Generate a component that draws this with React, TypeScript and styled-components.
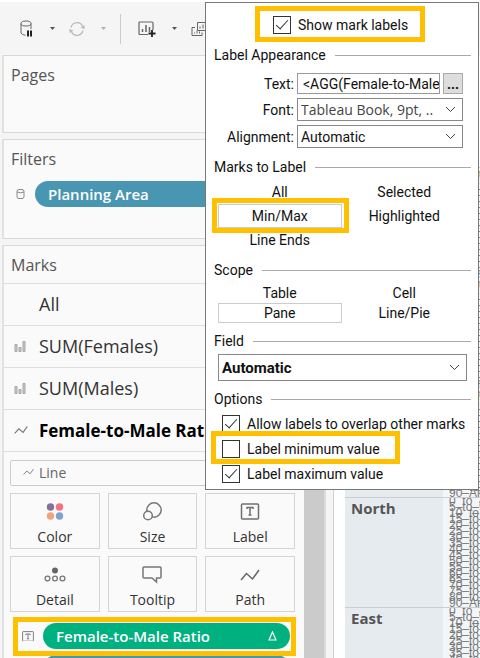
import React from "react";
import styled, { createGlobalStyle, css } from "styled-components";

const GlobalStyle = createGlobalStyle`
  *, *::before, *::after { box-sizing: border-box; }
  body { margin: 0; background: #fff; }
  button, input, select { font: inherit; color: inherit; margin: 0; padding: 0; }
`;

const book = `"Open Sans", "Noto Sans", sans-serif`;
const dialog = `Roboto, "Noto Sans", sans-serif`;

const Page = styled.div`
  position: relative;
  display: flex;
  flex-direction: column;
  height: 100vh;
  overflow: hidden;
  padding-top: 2px;
  background: #fff;
  font-family: ${book};
  color: #333;
`;

const Toolbar = styled.header`
  display: flex;
  align-items: center;
  height: 53px;
  flex: none;
  padding-left: 20px;
  background: #f5f5f5;
`;

const ToolButton = styled.button<{ $dim?: boolean }>`
  display: flex;
  align-items: center;
  border: 0;
  background: none;
  color: ${(p) => (p.$dim ? "#b8b8b8" : "#666")};
`;

const Caret = styled.button<{ $dim?: boolean }>`
  width: 5px;
  height: 3px;
  margin: 0 14px 0 16px;
  border: 0;
  background: ${(p) => (p.$dim ? "#b0b0b0" : "#555")};
  clip-path: polygon(0 0, 100% 0, 50% 100%);
`;

const ToolDivider = styled.span`
  width: 1px;
  height: 30px;
  margin-right: 17px;
  background: #ccc;
`;

const Workspace = styled.div`
  display: flex;
  flex: 1;
  min-height: 0;
`;

const Sidebar = styled.aside`
  flex: none;
  width: 304px;
  padding-left: 2px;
  display: flex;
  flex-direction: column;
  gap: 6px;
  background: #f5f5f5;
`;

const Shelf = styled.section<{ $height?: number }>`
  flex: none;
  ${(p) => p.$height && `height: ${p.$height}px;`}
  border: 1px solid #d8d8d8;
  border-left: 2px solid #e2e2e2;
  border-right: 0;
  background: #fafafa;
`;

const ShelfTitle = styled.h2`
  margin: 0;
  padding: 7px 7px 0;
  height: 37px;
  font-size: 16px;
  line-height: 24px;
  font-weight: 400;
  color: #555;
`;

const PillRow = styled.div`
  display: flex;
  align-items: center;
  padding-left: 12px;
  gap: 10px;
  margin-top: 4px;
`;

const Pill = styled.button<{ $green?: boolean }>`
  display: flex;
  align-items: center;
  justify-content: space-between;
  flex: 1;
  height: 26px;
  padding: 0 13px;
  border: 0;
  border-radius: 13px;
  background: ${(p) => (p.$green ? "#00b180" : "#4996b2")};
  color: #fff;
  font-size: 15px;
  font-weight: 600;
`;

const MarkRow = styled.button<{ $strong?: boolean }>`
  display: flex;
  align-items: center;
  width: 100%;
  height: 42px;
  padding-bottom: 1px;
  border: 0;
  border-top: 1px solid #dedede;
  background: none;
  font-size: 18px;
  text-align: left;
  white-space: nowrap;
  ${(p) => p.$strong && css`font-weight: 700; color: #000; font-size: 17px;`}
`;

const MarkIcon = styled.span`
  display: flex;
  align-items: center;
  padding-left: 10px;
  width: 35px;
`;

const MarkCard = styled.div`
  border-top: 1px solid #dedede;
  padding: 8px 9px 0 6px;
`;

const MarkType = styled.button`
  display: flex;
  align-items: center;
  gap: 5px;
  width: 100%;
  height: 26px;
  padding: 0 0 2px 12px;
  border: 1px solid #ccc;
  border-radius: 2px;
  background: #fafafa;
  color: #666;
  font-size: 14px;
`;

const Encodings = styled.div`
  display: grid;
  grid-template-columns: repeat(3, 1fr);
  gap: 7px 8px;
  margin-top: 7px;
`;

const Encoding = styled.button`
  display: flex;
  flex-direction: column;
  align-items: center;
  justify-content: space-between;
  height: 56px;
  padding: 7px 0 1px;
  border: 1px solid #d4d4d4;
  background: #fafafa;
  font-size: 14px;
  line-height: 20px;
`;

const MarkPills = styled.div`
  display: flex;
  flex-direction: column;
  gap: 6px;
  padding-top: 11px;
`;

const MarkPill = styled.div<{ $marked?: boolean }>`
  position: relative;
  display: grid;
  grid-template-columns: 12px 1fr;
  align-items: center;
  gap: 9px;
  padding: 0 5px 0 12px;
  ${(p) => p.$marked && css`
    &::after {
      content: "";
      position: absolute;
      inset: -6px -1px -7px 3px;
      border: 5px solid #ffc000;
      pointer-events: none;
      z-index: 1;
    }
  `}
`;

const Scrollbar = styled.div`
  flex: none;
  width: 20px;
  background: #cbcbcb;
`;

const Splitter = styled.div`
  flex: none;
  width: 10px;
  margin-right: 11px;
  border-left: 2px solid #dcdcdc;
  border-right: 1px solid #d0d0d0;
  background: #f5f5f5;
`;

const View = styled.main`
  flex: 1;
  min-width: 0;
  overflow: hidden;
  padding-top: 112px;
`;

const ViewTable = styled.table`
  width: 100%;
  table-layout: fixed;
  border-collapse: collapse;
`;

const Region = styled.th`
  width: 98px;
  height: 110px;
  padding: 0 0 0 6px;
  border-top: 1px solid #c8ced2;
  background: #e6ebf0;
  font-size: 15px;
  line-height: 20px;
  font-weight: 700;
  text-align: left;
  vertical-align: top;
  color: #555;
`;

const Ages = styled.td`
  height: 110px;
  padding: 0 0 0 6px;
  overflow: hidden;
  border-top: 1px solid #c8ced2;
  background: #f3f6f8;
  font-family: "Liberation Sans", sans-serif;
  font-size: 12px;
  color: #777;
  vertical-align: top;
`;

const Age = styled.div`
  height: 6px;
  line-height: 6px;
  white-space: nowrap;
`;

const Panel = styled.form`
  position: absolute;
  top: 2px;
  left: 205px;
  right: 1px;
  z-index: 2;
  padding: 0 7px 3px 8px;
  border: 1px solid #777;
  background: #fff;
  font-family: ${dialog};
  font-size: 14px;
  line-height: 20px;
  color: #111;
`;

const marker = css`
  &::after {
    content: "";
    position: absolute;
    border: 5px solid #ffc000;
    pointer-events: none;
    z-index: 1;
  }
`;

const Check = styled.label<{ $marked?: boolean }>`
  position: relative;
  display: flex;
  align-items: center;
  gap: 7px;
  height: 25px;
  white-space: nowrap;
  ${(p) => p.$marked && css`${marker} &::after { inset: -5px auto -3px -11px; width: 189px; }`}
`;

const HeadCheck = styled(Check)`
  width: 142px;
  height: 20px;
  margin: 12px auto 8px 59px;
  ${marker}
  &::after { inset: -9px -10px -7px -18px; }
`;

const Box = styled.input`
  appearance: none;
  flex: none;
  width: 18px;
  height: 18px;
  border: 1px solid #333;
  background: #fff;
  &:checked::after {
    content: "";
    display: block;
    width: 6px;
    height: 12px;
    margin: 0 0 0 5px;
    border: solid #333;
    border-width: 0 1px 1px 0;
    transform: rotate(42deg);
  }
`;

const Group = styled.fieldset`
  margin: 0;
  padding: 0;
  border: 0;
  min-width: 0;
`;

const Legend = styled.legend`
  display: flex;
  align-items: center;
  gap: 9px;
  width: 100%;
  height: 24px;
  padding: 0;
  white-space: nowrap;
  &::after {
    content: "";
    flex: 1;
    height: 1px;
    background: #aaa;
  }
`;

const Fields = styled.div`
  display: grid;
  grid-template-columns: 80px minmax(0, 1fr);
  column-gap: 3px;
  row-gap: 4px;
  align-items: center;
  padding: 6px 8px 7px 0;
`;

const FieldLabel = styled.label`
  text-align: right;
`;

const TextLine = styled.div`
  display: flex;
  gap: 3px;
  height: 21px;
`;

const TextBox = styled.input`
  flex: 1;
  min-width: 0;
  border: 1px solid #999;
  padding-left: 5px;
  background: #fff;
`;

const More = styled.button`
  flex: none;
  width: 20px;
  border: 1px solid #aaa;
  background: #ddd;
  line-height: 14px;
  font-weight: 700;
`;

const SelectWrap = styled.div<{ $field?: boolean }>`
  display: grid;
  align-items: center;
  height: 23px;
  ${(p) => p.$field && css`
    height: 27px;
    margin: 1px 4px 6px;
    font-weight: 700;
    font-size: 15px;
  `}
  > * { grid-area: 1 / 1; }
  > svg { justify-self: end; margin-right: 7px; pointer-events: none; }
`;

const Select = styled.select`
  appearance: none;
  width: 100%;
  height: 100%;
  padding: 0 0 0 3px;
  border: 1px solid #888;
  border-radius: 0;
  background: #fff;
`;

const FontSelect = styled(Select)`
  font-family: ${book};
  font-size: 14px;
  color: #444;
`;

const Choices = styled.div<{ $row: number }>`
  display: grid;
  grid-template-columns: 1fr 1fr;
  grid-auto-rows: ${(p) => p.$row}px;
  padding: 1px 4px 6px;
`;

const ChoiceLabel = styled.label<{ $marked?: boolean }>`
  position: relative;
  display: flex;
  align-items: center;
  justify-content: center;
  margin-right: 1px;
  border: 1px solid transparent;
  &:has(input:checked) { border-color: #ccc; }
  ${(p) => p.$marked && css`${marker} &::after { inset: -7px -8px -6px -7px; }`}
`;

const HiddenRadio = styled.input`
  appearance: none;
  width: 0;
  height: 0;
`;

const Options = styled.div`
  padding: 0 8px;
`;

const Chevron = () => (
  <svg width="11" height="7" viewBox="0 0 11 7" fill="none" stroke="#444">
    <path d="M1 1l4.5 4.5L10 1" />
  </svg>
);

const Bars = () => (
  <svg width="12" height="12" viewBox="0 0 12 12" fill="#ccc" stroke="#a4a4a4">
    <path d="M1 4.500h2v7H1zM5 7.500h2v4H5zM9 1.500h2v10H9z" />
  </svg>
);

const LineIcon = ({ w = 14, color = "#777" }: { w?: number; color?: string }) => (
  <svg width={w} height={w * 0.75} viewBox="0 0 20 15" fill="none" stroke={color} strokeWidth="1.6">
    <path d="M1 12l6-6.500 6 5 6-8.500" />
  </svg>
);

const TextIcon = ({ w }: { w: number }) => (
  <svg width={w} height={w * 0.9} viewBox="0 0 20 18" fill="none" stroke="#707070" strokeWidth="1.5">
    <rect x="1" y="1" width="18" height="16" rx="1" />
    <path d="M6.500 7V5h7v2M10 5v8M8 13h4" />
  </svg>
);

const encodings: [string, React.ReactNode][] = [
  ["Color", (
    <svg width="20" height="20" viewBox="0 0 20 20">
      <circle cx="5.500" cy="6" r="3.700" fill="#85709b" />
      <circle cx="14.500" cy="6" r="3.700" fill="#f86f80" />
      <circle cx="5.500" cy="15" r="3.700" fill="#f2a57c" />
      <circle cx="14.500" cy="15" r="3.700" fill="#7ea2cb" />
    </svg>
  )],
  ["Size", (
    <svg width="20" height="20" viewBox="0 0 20 20" fill="none" stroke="#777" strokeWidth="1.500">
      <circle cx="12" cy="9" r="7.200" />
      <circle cx="6" cy="14.500" r="4.300" fill="#fafafa" />
    </svg>
  )],
  ["Label", (
    <svg width="20" height="20" viewBox="0 0 20 20" fill="none" stroke="#707070" strokeWidth="1.500">
      <rect x="1.500" y="3" width="17" height="15" rx="1" />
      <path d="M7 8V6.500h6V8M10 6.500V14M8.500 14h3" />
    </svg>
  )],
  ["Detail", (
    <svg width="22" height="20" viewBox="0 0 22 20" fill="none" stroke="#777" strokeWidth="1.300">
      <circle cx="11" cy="6.500" r="3" fill="#666" stroke="none" />
      <circle cx="3.500" cy="14.500" r="2.400" />
      <circle cx="11" cy="14.500" r="2.400" />
      <circle cx="18.500" cy="14.500" r="2.400" />
    </svg>
  )],
  ["Tooltip", (
    <svg width="20" height="20" viewBox="0 0 20 20" fill="none" stroke="#777" strokeWidth="1.500">
      <path d="M2 3h16q1 0 1 1v9q0 1-1 1h-3.500v4L10 14H2q-1 0-1-1V4q0-1 1-1z" />
    </svg>
  )],
  ["Path", (
    <svg width="20" height="20" viewBox="0 0 20 20" fill="none" stroke="#666" strokeWidth="1.500">
      <path d="M1 16l5.500-6.500 6 5.500L19 6" />
    </svg>
  )],
];

const ages = ["0_to_4", "5_to_9", "10_to_14", "15_to_19", "20_to_24", "25_to_29", "30_to_34", "35_to_39", "40_to_44", "45_to_49", "50_to_54", "55_to_59", "60_to_64", "65_to_69", "70_to_74", "75_to_79", "80_to_84", "90_And_Over"];

const Choice = ({ group, text, checked, marked }: { group: string; text: string; checked?: boolean; marked?: boolean }) => (
  <ChoiceLabel $marked={marked}>
    <HiddenRadio type="radio" name={group} defaultChecked={checked} />
    {text}
  </ChoiceLabel>
);

export default function App() {
  return (
    <Page>
      <GlobalStyle />
      <Toolbar>
        <ToolButton aria-label="Pause data updates">
          <svg width="14" height="18" viewBox="0 0 14 18" fill="none" stroke="currentColor">
            <ellipse cx="6" cy="3.500" rx="5" ry="2.500" />
            <path d="M1 3.500v9.500q1 2 4.500 2.300M11 3.500V9" />
            <path d="M8 10.500v6M11 10.500v6" stroke="#222" strokeWidth="2" />
          </svg>
        </ToolButton>
        <Caret aria-label="Data update options" />
        <ToolButton $dim aria-label="Refresh">
          <svg width="16" height="16" viewBox="0 0 16 16" fill="none" stroke="currentColor" strokeWidth="1.200">
            <path d="M2 6.500A6.200 6.200 0 0 1 13.500 5M14 9.500A6.200 6.200 0 0 1 2.500 11" />
            <path d="M15.500 4v4l-4-1.500zM.5 12V8l4 1.500z" fill="currentColor" stroke="none" />
          </svg>
        </ToolButton>
        <Caret aria-label="Refresh options" $dim />
        <ToolDivider />
        <ToolButton aria-label="New worksheet">
          <svg width="18" height="18" viewBox="0 0 18 18" fill="none" stroke="currentColor">
            <path d="M10 14.500H2q-1 0-1-1V3q0-1 1-1h12q1 0 1 1v7" strokeWidth="1.200" />
            <path d="M4.500 12V9M8 12V5M11.500 12V7" strokeWidth="1.500" />
            <path d="M14 10v7M10.500 13.500h7" stroke="#222" strokeWidth="1.800" />
          </svg>
        </ToolButton>
        <Caret aria-label="New worksheet options" />
        <ToolButton aria-label="Duplicate">
          <svg width="20" height="18" viewBox="0 0 20 18" fill="none" stroke="currentColor">
            <path d="M6.500 2.500h12v8h-12zM4 7.500H1v8h10v-3M3.500 13.500v-1M6 13.500v-3M8.500 13.500v-2M9 8.500v-2M12 8.500v-4M15 8.500v-3" />
          </svg>
        </ToolButton>
      </Toolbar>

      <Workspace>
        <Sidebar>
          <Shelf $height={78}>
            <ShelfTitle>Pages</ShelfTitle>
          </Shelf>
          <Shelf $height={100}>
            <ShelfTitle>Filters</ShelfTitle>
            <PillRow>
              <svg width="9" height="12" viewBox="0 0 9 12" fill="none" stroke="#888">
                <rect x="1" y="1.500" width="7" height="9" rx="2" />
                <path d="M1 4q3.500 1.500 7 0" />
              </svg>
              <Pill>Planning Area</Pill>
            </PillRow>
          </Shelf>
          <Shelf>
            <ShelfTitle>Marks</ShelfTitle>
            <MarkRow><MarkIcon />All</MarkRow>
            <MarkRow><MarkIcon><Bars /></MarkIcon>SUM(Females)</MarkRow>
            <MarkRow><MarkIcon><Bars /></MarkIcon>SUM(Males)</MarkRow>
            <MarkRow $strong><MarkIcon><LineIcon /></MarkIcon>Female-to-Male Ratio</MarkRow>
            <MarkCard>
              <MarkType><LineIcon w={11} />Line</MarkType>
              <Encodings>
                {encodings.map(([name, icon]) => (
                  <Encoding key={name}>{icon}{name}</Encoding>
                ))}
              </Encodings>
              <MarkPills>
                <MarkPill $marked>
                  <TextIcon w={12} />
                  <Pill $green>
                    Female-to-Male Ratio
                    <svg width="9" height="10" viewBox="0 0 9 10" fill="none" stroke="#fff" strokeWidth="1.200">
                      <path d="M4.500 1L8 9H1z" />
                    </svg>
                  </Pill>
                </MarkPill>
                <MarkPill><span /><Pill aria-label="Next field" /></MarkPill>
              </MarkPills>
            </MarkCard>
          </Shelf>
        </Sidebar>
        <Scrollbar />
        <Splitter />
        <View>
          <ViewTable>
            <tbody>
              {["", "", "", "North", "East"].map((name, i) => (
                <tr key={i}>
                  <Region scope="row">{name}</Region>
                  <Ages>{ages.map((a) => <Age key={a}>{a}</Age>)}</Ages>
                </tr>
              ))}
            </tbody>
          </ViewTable>
        </View>
      </Workspace>

      <Panel onSubmit={(e) => e.preventDefault()}>
        <HeadCheck><Box type="checkbox" defaultChecked />Show mark labels</HeadCheck>
        <Group>
          <Legend>Label Appearance</Legend>
          <Fields>
            <FieldLabel htmlFor="text">Text:</FieldLabel>
            <TextLine>
              <TextBox id="text" defaultValue="<AGG(Female-to-Male Ratio)>" />
              <More type="button" aria-label="Edit label text">...</More>
            </TextLine>
            <FieldLabel htmlFor="font">Font:</FieldLabel>
            <SelectWrap>
              <FontSelect id="font"><option>Tableau Book, 9pt, ..</option></FontSelect>
              <Chevron />
            </SelectWrap>
            <FieldLabel htmlFor="align">Alignment:</FieldLabel>
            <SelectWrap>
              <Select id="align"><option>Automatic</option></Select>
              <Chevron />
            </SelectWrap>
          </Fields>
        </Group>
        <Group>
          <Legend>Marks to Label</Legend>
          <Choices $row={24}>
            <Choice group="marks" text="All" />
            <Choice group="marks" text="Selected" />
            <Choice group="marks" text="Min/Max" checked marked />
            <Choice group="marks" text="Highlighted" />
            <Choice group="marks" text="Line Ends" />
          </Choices>
        </Group>
        <Group>
          <Legend>Scope</Legend>
          <Choices $row={20}>
            <Choice group="scope" text="Table" />
            <Choice group="scope" text="Cell" />
            <Choice group="scope" text="Pane" checked />
            <Choice group="scope" text="Line/Pie" />
          </Choices>
        </Group>
        <Group>
          <Legend>Field</Legend>
          <SelectWrap $field>
            <Select aria-label="Field"><option>Automatic</option></Select>
            <Chevron />
          </SelectWrap>
        </Group>
        <Group>
          <Legend>Options</Legend>
          <Options>
            <Check><Box type="checkbox" defaultChecked />Allow labels to overlap other marks</Check>
            <Check $marked><Box type="checkbox" />Label minimum value</Check>
            <Check><Box type="checkbox" defaultChecked />Label maximum value</Check>
          </Options>
        </Group>
      </Panel>
    </Page>
  );
}
